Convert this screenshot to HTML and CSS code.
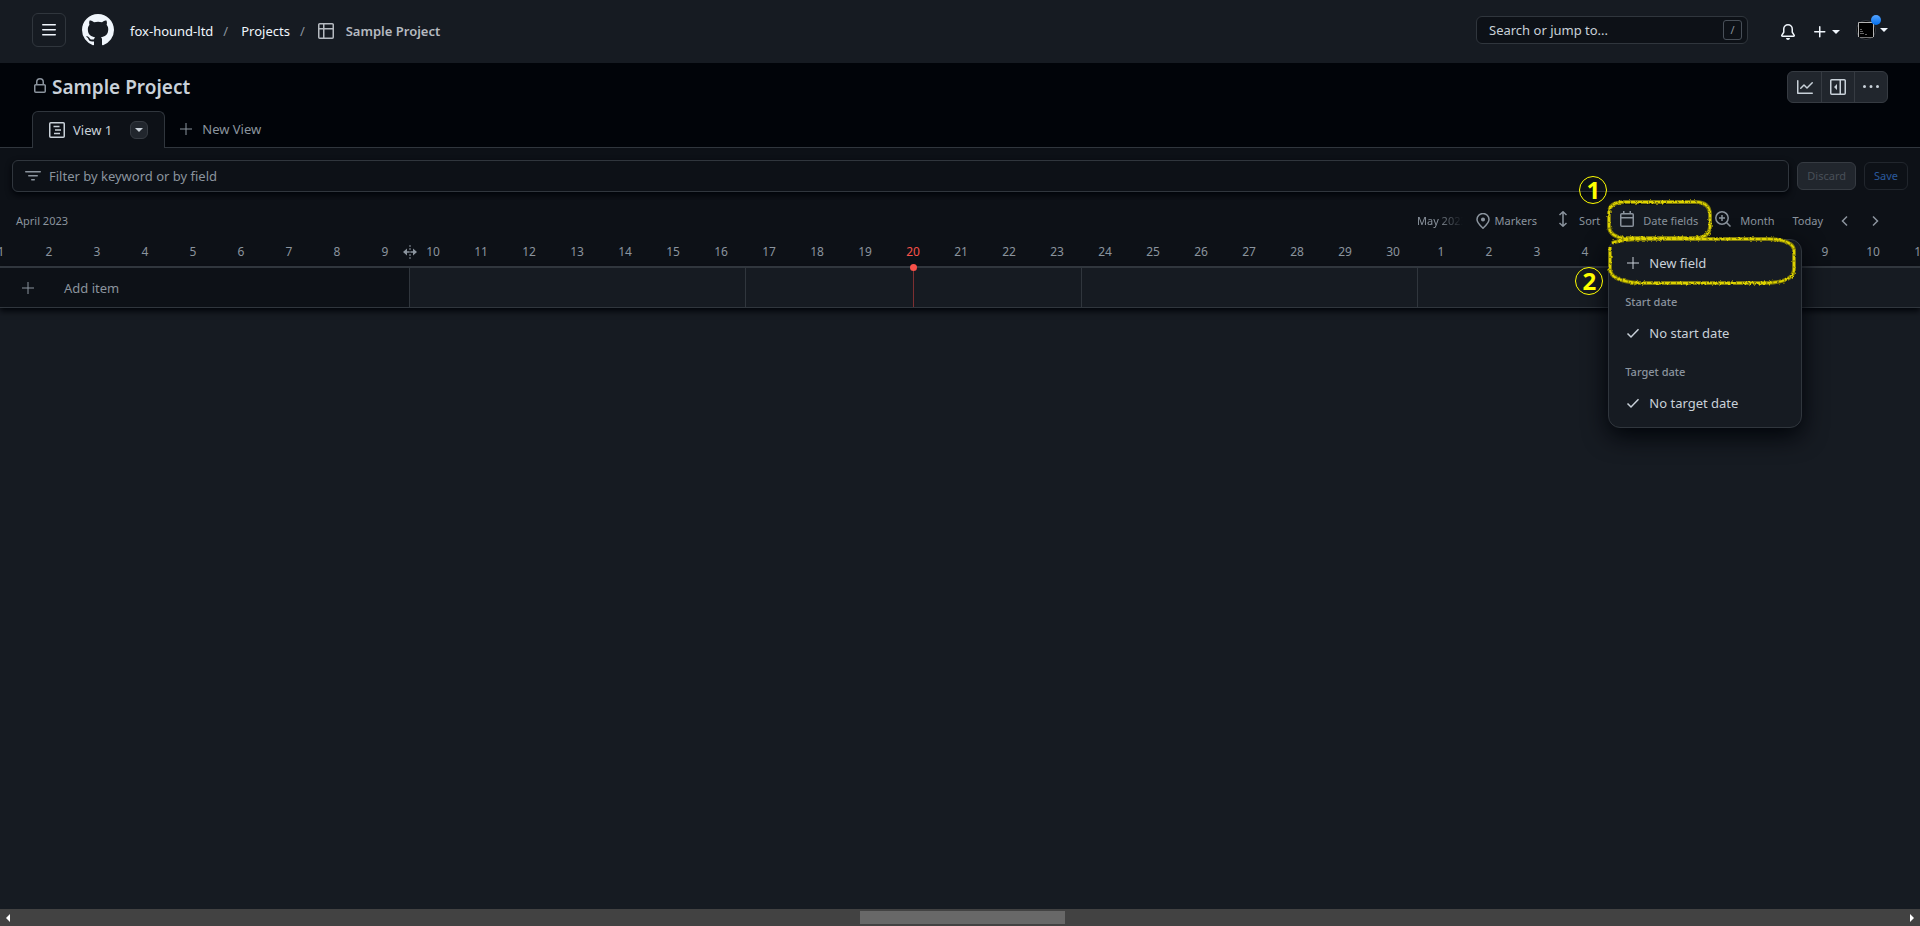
FILE: index.html
```html
<!DOCTYPE html>
<html lang="en">
<head>
<meta charset="utf-8">
<title>Sample Project</title>
<meta name="viewport" content="width=device-width, initial-scale=1">
<link rel="stylesheet" href="styles.css">
</head>
<body>

<header class="topbar">
	<button class="menu-btn" aria-label="Menu"><svg width="16" height="16" viewBox="0 0 16 16"><path d="M1 2.75A.75.75 0 0 1 1.75 2h12.5a.75.75 0 0 1 0 1.5H1.75A.75.75 0 0 1 1 2.75Zm0 5A.75.75 0 0 1 1.75 7h12.5a.75.75 0 0 1 0 1.5H1.75A.75.75 0 0 1 1 7.75ZM1.75 12h12.5a.75.75 0 0 1 0 1.5H1.75a.75.75 0 0 1 0-1.5Z"/></svg></button>
	<a href="#" class="logo" aria-label="Home"><svg width="32" height="32" viewBox="0 0 16 16"><path d="M8 0c4.42 0 8 3.58 8 8a8.013 8.013 0 0 1-5.45 7.59c-.4.08-.55-.17-.55-.38 0-.27.01-1.13.01-2.2 0-.75-.25-1.23-.54-1.48 1.78-.2 3.65-.88 3.65-3.95 0-.88-.31-1.59-.82-2.15.08-.2.36-1.02-.08-2.12 0 0-.67-.22-2.2.82-.64-.18-1.32-.27-2-.27-.68 0-1.36.09-2 .27-1.53-1.03-2.2-.82-2.2-.82-.44 1.1-.16 1.92-.08 2.12-.51.56-.82 1.28-.82 2.15 0 3.06 1.86 3.75 3.64 3.95-.23.2-.44.55-.51 1.07-.46.21-1.61.55-2.33-.66-.15-.24-.6-.83-1.23-.82-.67.01-.27.38.01.53.34.19.73.9.82 1.13.16.45.68 1.31 2.69.94 0 .67.01 1.3.01 1.49 0 .21-.15.45-.55.38A7.995 7.995 0 0 1 0 8c0-4.42 3.58-8 8-8Z"/></svg></a>
	<nav class="crumbs">
		<a href="#">fox-hound-ltd</a><span class="slash">/</span>
		<a href="#">Projects</a><span class="slash">/</span>
		<svg width="16" height="16" viewBox="0 0 16 16"><path d="M0 1.75C0 .784.784 0 1.75 0h12.5C15.216 0 16 .784 16 1.75v12.5A1.75 1.75 0 0 1 14.25 16H1.75A1.75 1.75 0 0 1 0 14.25ZM6.5 6.5v8h7.75a.25.25 0 0 0 .25-.25V6.5Zm8-1.5V1.75a.25.25 0 0 0-.25-.25H6.5V5Zm-13 1.5v7.75c0 .138.112.25.25.25H5v-8ZM5 5V1.5H1.75a.25.25 0 0 0-.25.25V5Z"/></svg>
		<a href="#" class="current">Sample Project</a>
	</nav>
	<label class="search">
		<input type="text" placeholder="Search or jump to..." aria-label="Search or jump to">
		<kbd>/</kbd>
	</label>
	<button class="plain bell" aria-label="Notifications"><svg width="16" height="16" viewBox="0 0 16 16"><path d="M8 16a2 2 0 0 0 1.985-1.75c.017-.137-.097-.25-.235-.25h-3.5c-.138 0-.252.113-.235.25A2 2 0 0 0 8 16ZM3 5a5 5 0 0 1 10 0v2.947c0 .05.015.098.042.139l1.703 2.555A1.519 1.519 0 0 1 13.482 13H2.518a1.516 1.516 0 0 1-1.263-2.36l1.703-2.554A.255.255 0 0 0 3 7.947Zm5-3.5A3.5 3.5 0 0 0 4.5 5v2.947c0 .346-.102.683-.294.97l-1.703 2.556a.017.017 0 0 0-.003.01l.001.006.004.006.006.004.007.001h10.964l.007-.001.006-.004.004-.006.001-.007a.017.017 0 0 0-.003-.01l-1.703-2.554a1.745 1.745 0 0 1-.294-.97V5A3.5 3.5 0 0 0 8 1.5Z"/></svg></button>
	<button class="plain add" aria-label="Create new"><svg width="16" height="16" viewBox="0 0 16 16"><path d="M7.75 2a.75.75 0 0 1 .75.75V7h4.25a.75.75 0 0 1 0 1.5H8.5v4.25a.75.75 0 0 1-1.5 0V8.5H2.75a.75.75 0 0 1 0-1.5H7V2.75A.75.75 0 0 1 7.75 2Z"/></svg><i class="caret"></i></button>
	<button class="plain user" aria-label="Account">
		<svg width="20" height="20" viewBox="0 0 20 20"><circle cx="10" cy="10" r="10" fill="#30363d"/><circle cx="10" cy="10" r="9" fill="#050505"/><path d="M2.5 17V2.500h15V17" fill="#000" stroke="#b5b5b5"/><path d="M4 17.500h13" stroke="#777"/><path d="M4 9.500h2M4 11.500h3M4 13.500h4M9 14.500h2" fill="none" stroke="#666"/></svg>
		<i class="dot"></i><i class="caret"></i>
	</button>
</header>

<section class="project">
	<div class="title-row">
		<svg class="lock" width="16" height="16" viewBox="0 0 16 16"><path d="M4 4a4 4 0 0 1 8 0v2h.25c.966 0 1.75.784 1.75 1.75v5.5A1.75 1.75 0 0 1 12.25 15h-8.5A1.75 1.75 0 0 1 2 13.25v-5.5C2 6.784 2.784 6 3.75 6H4Zm8.25 3.5h-8.5a.25.25 0 0 0-.25.25v5.5c0 .138.112.25.25.25h8.5a.25.25 0 0 0 .25-.25v-5.5a.25.25 0 0 0-.25-.25ZM10.5 6V4a2.5 2.5 0 1 0-5 0v2Z"/></svg>
		<h1>Sample Project</h1>
		<div class="btn-group">
			<button aria-label="Insights"><svg width="16" height="16" viewBox="0 0 16 16"><path d="M1.5 1.75V13.5h13.75a.75.75 0 0 1 0 1.5H.75a.75.75 0 0 1-.75-.75V1.75a.75.75 0 0 1 1.5 0Zm14.28 2.53-5.25 5.25a.75.75 0 0 1-1.06 0L7 7.06 4.28 9.78a.751.751 0 0 1-1.06-1.06l3.25-3.25a.75.75 0 0 1 1.06 0L10 7.94l4.72-4.72a.751.751 0 0 1 1.06 1.06Z"/></svg></button>
			<button aria-label="Project details"><svg width="16" height="16" viewBox="0 0 16 16"><path d="M0 1.75C0 .784.784 0 1.75 0h12.5C15.216 0 16 .784 16 1.75v12.5A1.75 1.75 0 0 1 14.25 16H1.75A1.75 1.75 0 0 1 0 14.25Zm1.75-.25a.25.25 0 0 0-.25.25v12.5c0 .138.112.25.25.25H9.5v-13Zm12.5 13a.25.25 0 0 0 .25-.25V1.75a.25.25 0 0 0-.25-.25H11v13ZM7 5v6L4 8Z"/></svg></button>
			<button aria-label="More"><svg width="16" height="16" viewBox="0 0 16 16"><path d="M8 9a1.5 1.5 0 1 0 0-3 1.5 1.5 0 0 0 0 3ZM1.5 9a1.5 1.5 0 1 0 0-3 1.5 1.5 0 0 0 0 3Zm13 0a1.5 1.5 0 1 0 0-3 1.5 1.5 0 0 0 0 3Z"/></svg></button>
		</div>
	</div>
	<nav class="tabs">
		<div class="tab">
			<svg width="16" height="16" viewBox="0 0 16 16" class="line"><rect x=".75" y=".75" width="14.5" height="14.5" rx="1"/><path d="M4.500 4.500h6M6 8h6M5 11.500h6"/></svg>
			<a href="#">View 1</a>
			<button class="tab-menu" aria-label="View options"><i class="caret"></i></button>
		</div>
		<button class="plain new-view"><svg width="16" height="16" viewBox="0 0 16 16" class="line thin"><path d="M8 2v12M2 8h12"/></svg>New View</button>
	</nav>
</section>

<section class="filter-row">
	<label class="filter">
		<svg width="16" height="16" viewBox="0 0 16 16"><path d="M.75 3h14.5a.75.75 0 0 1 0 1.5H.75a.75.75 0 0 1 0-1.5ZM3 7.75A.75.75 0 0 1 3.75 7h8.5a.75.75 0 0 1 0 1.5h-8.5A.75.75 0 0 1 3 7.75Zm3 4a.75.75 0 0 1 .75-.75h2.5a.75.75 0 0 1 0 1.5h-2.5a.75.75 0 0 1-.75-.75Z"/></svg>
		<input type="text" placeholder="Filter by keyword or by field" aria-label="Filter by keyword or by field">
	</label>
	<button class="small discard" disabled>Discard</button>
	<button class="small save">Save</button>
</section>

<main class="timeline">
	<div class="months">
		<div class="april">April 2023</div>
		<div class="may">May 2023</div>
		<div class="tools">
			<button class="plain markers"><svg width="16" height="16" viewBox="0 0 16 16" class="line"><path d="M8 15.200C5 12.300 2 9.700 2 6.500a6 6 0 0 1 12 0c0 3.200-3 5.800-6 8.700Z"/><circle cx="8" cy="6.500" r="1.300" fill="currentColor"/></svg>Markers</button>
			<button class="plain sort raised"><svg width="16" height="16" viewBox="0 0 16 16" class="line"><path d="M8 1v14M4.500 4 8 .8 11.500 4M4.500 12 8 15.200 11.500 12"/></svg>Sort</button>
			<div class="dates">
				<button class="plain date-btn raised"><svg width="16" height="16" viewBox="0 0 16 16" class="line"><rect x="1.750" y="2.750" width="12.500" height="12.500" rx="1"/><path d="M2 6.700h12M4.750 0v3M11.250 0v3"/></svg>Date fields</button>
				<div class="menu" role="menu">
					<button class="plain item"><svg width="16" height="16" viewBox="0 0 16 16" class="line thin"><path d="M8 2v12M2 8h12"/></svg>New field</button>
					<h2>Start date</h2>
					<button class="plain item"><svg width="16" height="16" viewBox="0 0 16 16" class="line"><path d="m2.500 8.500 3.500 3.500 7.500-7.800"/></svg>No start date</button>
					<h2>Target date</h2>
					<button class="plain item"><svg width="16" height="16" viewBox="0 0 16 16" class="line"><path d="m2.500 8.500 3.500 3.500 7.500-7.800"/></svg>No target date</button>
				</div>
				<!-- hand-drawn outlines round the two steps -->
				<svg class="marks" width="240" height="130" viewBox="0 0 240 130">
					<defs>
						<filter id="rough" x="-5%" y="-15%" width="110%" height="130%"><feTurbulence type="fractalNoise" baseFrequency=".4" numOctaves="2" seed="4"/><feDisplacementMap in="SourceGraphic" scale="3"/></filter>
						<path id="outline-1" d="M46 31H116Q131 31 131 44V56Q130 67 116 67H44Q30 65 30 55V42Q30 31 46 31Z"/>
						<path id="outline-2" d="M33 72Q42 68 70 68H190Q215 69 215 80V98Q215 112 184 112H60Q31 110 31 98V76"/>
					</defs>
					<g filter="url(#rough)" fill="none">
						<g stroke="#7d7808" stroke-width="4"><use href="#outline-1"/><use href="#outline-2"/></g>
						<g stroke="#ddd200" stroke-width="2" stroke-dasharray="5 1"><use href="#outline-1"/><use href="#outline-2"/></g>
					</g>
				</svg>
				<span class="step step-1">1</span>
				<span class="step step-2">2</span>
			</div>
			<button class="plain zoom raised"><svg width="16" height="16" viewBox="0 0 16 16" class="line"><circle cx="7" cy="7" r="6.200"/><path d="m11.500 11.500 4 4M7 4v6M4 7h6"/></svg>Month</button>
			<button class="plain today">Today</button>
			<button class="plain nav" aria-label="Previous"><svg width="16" height="16" viewBox="0 0 16 16" class="line"><path d="M10 3.500 5.500 8l4.500 4.500"/></svg></button>
			<button class="plain nav" aria-label="Next"><svg width="16" height="16" viewBox="0 0 16 16" class="line"><path d="M6 3.500 10.500 8 6 12.500"/></svg></button>
		</div>
	</div>
	<div class="days" id="days">
		<svg class="resize" width="16" height="16" viewBox="0 0 16 16"><path d="M5 4.500v2.700h2v1.600H5v2.700L1 8ZM11 4.500v2.700H9v1.600h2v2.700L15 8Z"/><path d="M8 1v14" stroke="currentColor" stroke-dasharray="2 1"/></svg>
	</div>
	<div class="row">
		<button class="plain add-item"><svg width="16" height="16" viewBox="0 0 16 16" class="line thin"><path d="M8 2v12M2 8h12"/></svg>Add item</button>
		<div class="week"></div>
		<div class="week"></div>
		<div class="week"></div>
		<div class="week"></div>
		<div class="week"></div>
		<i class="now"></i>
	</div>
</main>

<footer class="scrollbar"><i class="arrow left"></i><i class="thumb"></i><i class="arrow right"></i></footer>

<script>

var days = document.getElementById('days');
for(var i = 1; i <= 41; i++){
	var d = document.createElement('span');
	d.className = i === 20 ? 'day is-today' : 'day';
	d.textContent = i > 30 ? i - 30 : i;
	days.appendChild(d);
}

</script>
</body></html>
```
FILE: styles.css
```css
* {box-sizing: border-box;}
body {display: flex; flex-direction: column; min-height: 100vh; margin: 0; overflow: hidden; background: #161b22; color: #c9d1d9; font: 13px/20px "Noto Sans", "Open Sans", sans-serif;}
a {color: inherit; text-decoration: none;}
svg {flex: none; fill: currentColor;}
.line {fill: none; stroke: currentColor; stroke-width: 1.5;}
.thin {stroke-width: 1;}
button, input {font: inherit; color: inherit;}
button {padding: 0; cursor: pointer;}
.plain {display: flex; align-items: center; border: 0; background: none;}
.caret {border: 4px solid transparent; border-top-color: currentColor; border-bottom: 0;}

.topbar {display: flex; align-items: center; height: 63px; padding: 0 32px 3px; color: #f0f6fc;}
.menu-btn {display: grid; place-items: center; width: 34px; height: 34px; margin-right: 16px; border: 1px solid #30363d; border-radius: 6px; background: none;}
.logo {display: flex; margin-right: 16px;}
.crumbs {display: flex; align-items: center; flex: 1; padding-top: 2px;}
.crumbs svg {margin-right: 12px; color: #b5bac0;}
.crumbs .current {color: #b5bac0; font-weight: 600;}
.slash {margin: 0 13px 0 10px; color: #8b949e;}
.search {display: flex; align-items: center; width: 272px; height: 28px; margin-right: 32px; padding: 0 5px 0 12px; border: 1px solid #30363d; border-radius: 6px; background: #0d1117;}
.search input, .filter input {flex: 1; min-width: 0; padding: 0; border: 0; outline: 0; background: none;}
.search input::placeholder {color: #c9d1d9; opacity: 1;}
kbd {width: 19px; height: 20px; border: 1px solid #484f58; border-radius: 3px; color: #8b949e; font: 11px/18px "Noto Sans", sans-serif; text-align: center;}
.bell {margin-right: 16px; padding-top: 3px;}
.add {gap: 4px; margin-right: 16px; padding-top: 3px;}
.user {position: relative; gap: 4px;}
.dot {position: absolute; top: -5px; left: 15px; width: 10px; height: 10px; border-radius: 50%; background: linear-gradient(#54a3ff, #006eed);}

.project {background: #010409;}
.title-row {display: flex; align-items: center; height: 48px; padding: 0 32px;}
.lock {margin-right: 4px; margin-bottom: 3px; color: #8b949e;}
h1 {flex: 1; margin: 0; font-size: 19px; line-height: 28px; font-weight: 600;}
.btn-group {display: flex; border: 1px solid #363b42; border-radius: 6px; background: #21262d;}
.btn-group button {display: grid; place-items: center; width: 33px; height: 30px; border: 0; background: none;}
.btn-group button + button {border-left: 1px solid #363b42;}
.tabs {display: flex; height: 37px; padding: 0 32px; border-bottom: 1px solid #30363d;}
.tab {display: flex; align-items: center; height: 37px; padding: 0 16px; border: 1px solid #30363d; border-bottom: 0; border-radius: 6px 6px 0 0; background: #0d1117;}
.tab svg {margin-right: 8px;}
.tab-menu {display: grid; place-items: center; width: 18px; height: 18px; margin-left: 18px; border: 1px solid #363b42; border-radius: 6px; background: #21262d;}
.new-view {gap: 8px; padding: 0 13px; color: #8b949e;}

.filter-row {display: flex; align-items: center; gap: 8px; padding: 12px 12px 8px; background: #0d1117;}
.filter {display: flex; align-items: center; gap: 8px; flex: 1; height: 32px; padding: 0 12px; border: 1px solid #30363d; border-radius: 6px; color: #8b949e; box-shadow: 0 3px 6px #010409;}
.filter input::placeholder {color: #8b949e; opacity: 1;}
.small {height: 28px; padding: 0 9px; border: 1px solid #363b42; border-radius: 6px; background: #21262d; font-size: 11px;}
.discard {color: #484f58;}
.save {border-color: #21262d; background: none; color: #2b5a9e;}

.timeline {flex: 1; color: #8b949e; font-size: 11px;}
.months {display: flex; align-items: center; height: 42px; background: #0d1117;}
/* one day is 48px wide, so May starts at 1417px */
.april {width: 1417px; padding-left: 16px;}
.may {flex: 1; min-width: 0; overflow: hidden; white-space: nowrap; -webkit-mask: linear-gradient(90deg, #000 20px, transparent 46px); mask: linear-gradient(90deg, #000 20px, transparent 46px);}
.tools {display: flex; align-items: center; padding-right: 37px;}
.tools .plain {white-space: nowrap;}
.raised svg {margin-bottom: 4px;}
.markers {gap: 4px; margin-right: 18px;}
.sort {gap: 8px; margin-right: 9px;}
.dates {position: relative; margin-right: 5px;}
.date-btn {gap: 8px; height: 32px; padding: 0 12px 0 10px; border-radius: 6px; background: #161b22;}
.zoom {gap: 9px; margin-right: 18px;}
.today {margin-right: 14px;}
.nav {width: 16px;}
.nav + .nav {margin-left: 14px;}

.days {position: relative; display: flex; height: 24px; background: #0d1117; overflow: hidden;}
.day {flex: none; width: 48px; text-align: center; font-size: 12px;}
.day:nth-of-type(1) {margin-left: -23px;}
.is-today {color: #f85149;}
.resize {position: absolute; left: 402px; top: 2px;}
.row {position: relative; display: flex; height: 42px; border-top: 2px solid #30363d; border-bottom: 1px solid #30363d; box-shadow: 0 3px 6px #010409; overflow-x: clip;}
.add-item {flex: none; gap: 28px; width: 409px; padding-left: 20px; background: #0d1117; font-size: 13px;}
.week {flex: none; width: 336px; border-left: 1px solid #30363d;}
.now {position: absolute; top: 0; bottom: 0; left: 913px; width: 1px; background: #7d2f31;}
.now::before {content: ""; position: absolute; top: -4px; left: -3px; width: 7px; height: 7px; border-radius: 50%; background: #f85149;}

.menu {position: absolute; z-index: 1; top: 34px; left: -1px; width: 194px; padding: 7px 16px 8px; border: 1px solid #30363d; border-radius: 12px; background: #161b22; color: #c9d1d9; box-shadow: 0 8px 24px #010409;}
.item {gap: 8px; width: 100%; height: 32px; font-size: 13px;}
.menu h2 {margin: 14px 0 6px; color: #8b949e; font-size: 11px; line-height: 18px; font-weight: 500;}
.marks {position: absolute; z-index: 2; top: -34px; left: -30px; pointer-events: none;}
.step {position: absolute; z-index: 2; width: 28px; height: 28px; border: 1px solid #ff0; border-radius: 50%; color: #ff0; font: 700 24px/26px "Open Sans", sans-serif; text-align: center;}
.step-1 {top: -29px; left: -30px;}
.step-2 {top: 62px; left: -34px;}

.scrollbar {display: flex; align-items: center; justify-content: space-between; height: 17px; padding: 0 6px; background: #424242;}
.thumb {width: 205px; height: 13px; margin-left: 5px; background: #686868;}
.arrow {border: 4px solid transparent;}
.left {border-left: 0; border-right-color: #fff;}
.right {border-right: 0; border-left-color: #fff;}
```
